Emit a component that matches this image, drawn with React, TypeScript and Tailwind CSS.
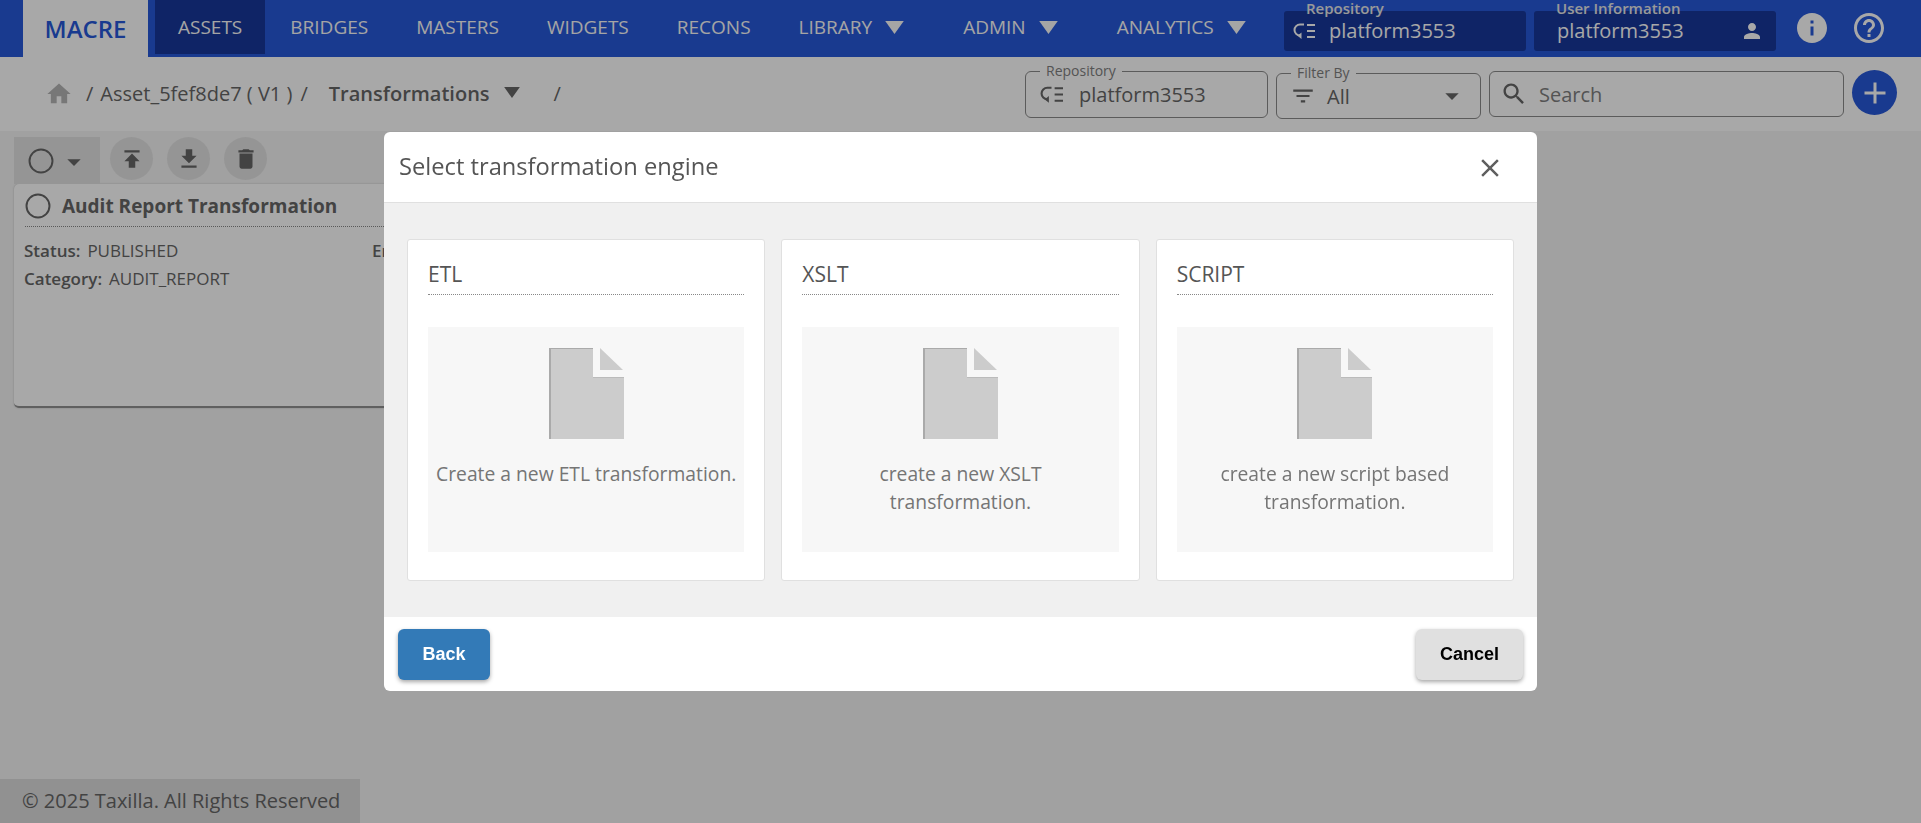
import React from 'react';

const ICONS = {
  home: 'M10 20v-6h4v6h5v-8h3L12 3 2 12h3v8z',
  person: 'M12 12c2.21 0 4-1.79 4-4s-1.79-4-4-4-4 1.79-4 4 1.79 4 4 4zm0 2c-2.67 0-8 1.34-8 4v2h16v-2c0-2.66-5.33-4-8-4z',
  info: 'M12 2C6.48 2 2 6.48 2 12s4.48 10 10 10 10-4.48 10-10S17.52 2 12 2zm1 15h-2v-6h2v6zm0-8h-2V7h2v2z',
  help: 'M11 18h2v-2h-2v2zm1-16C6.48 2 2 6.48 2 12s4.48 10 10 10 10-4.48 10-10S17.52 2 12 2zm0 18c-4.41 0-8-3.59-8-8s3.59-8 8-8 8 3.59 8 8-3.59 8-8 8zm0-14c-2.21 0-4 1.79-4 4h2c0-1.1.9-2 2-2s2 .9 2 2c0 2-3 1.75-3 5h2c0-2.25 3-2.5 3-5 0-2.21-1.79-4-4-4z',
  search: 'M15.5 14h-.79l-.28-.27C15.41 12.59 16 11.11 16 9.5 16 5.91 13.09 3 9.5 3S3 5.91 3 9.5 5.91 16 9.5 16c1.61 0 3.09-.59 4.23-1.57l.27.28v.79l5 4.99L20.49 19l-4.99-5zm-6 0C7.01 14 5 11.99 5 9.5S7.01 5 9.5 5 14 7.01 14 9.5 11.99 14 9.5 14z',
  filter: 'M10 18h4v-2h-4v2zM3 6v2h18V6H3zm3 7h12v-2H6v2z',
  publish: 'M5 4v2h14V4H5zm0 10h4v6h6v-6h4l-7-7-7 7z',
  download: 'M19 9h-4V3H9v6H5l7 7 7-7zM5 18v2h14v-2H5z',
  trash: 'M6 19c0 1.1.9 2 2 2h8c1.1 0 2-.9 2-2V7H6v12zM19 4h-3.5l-1-1h-5l-1 1H5v2h14V4z',
  add: 'M19 13h-6v6h-2v-6H5v-2h6V5h2v6h6v2z',
  close: 'M19 6.41 17.59 5 12 10.59 6.41 5 5 6.41 10.59 12 5 17.59 6.41 19 12 13.41 17.59 19 19 17.59 13.41 12z',
  drop: 'M7 10l5 5 5-5z',
};

const Icon = ({ name, className }: { name: keyof typeof ICONS; className: string }) => (
  <svg viewBox="0 0 24 24" className={className} fill="currentColor">
    <path d={ICONS[name]} />
  </svg>
);

// repository glyph: a C with an arrow at its foot, and three bars
const RepoIcon = ({ className }: { className: string }) => (
  <svg viewBox="0 0 22 16" className={className} fill="none" stroke="currentColor" strokeWidth="2">
    <path d="M11 1.5H7A5.5 5.5 0 0 0 7 12.5" />
    <path d="M8.5 9.5V16L4.5 12.8z" fill="currentColor" stroke="none" />
    <path d="M14 2h8M14 8h8M14 14h8" />
  </svg>
);

const Radio = ({ className }: { className: string }) => (
  <svg viewBox="0 0 24 24" className={className} fill="none" stroke="currentColor" strokeWidth="1.8">
    <circle cx="12" cy="12" r="10.6" />
  </svg>
);

const Triangle = ({ className }: { className: string }) => (
  <svg viewBox="0 0 20 14" className={className} fill="currentColor">
    <path d="M0 0h20L10 14z" />
  </svg>
);

const DocIcon = () => (
  <svg viewBox="0 0 75 91" className="w-[75px] h-[91px]">
    <path d="M0 0h44v30h31v61H0z" fill="#cccccc" />
    <path d="M0 0h44v1H2v90H0z" fill="#aaaaaa" />
    <path d="M51 0 74 22H51z" fill="#cccccc" />
    <path d="M44 29h31v1H44z" fill="#bbbbbb" />
  </svg>
);

const NAV = ['BRIDGES', 'MASTERS', 'WIDGETS', 'RECONS'];

const ENGINES = [
  { title: 'ETL', lines: ['Create a new ETL transformation.'] },
  { title: 'XSLT', lines: ['create a new XSLT', 'transformation.'] },
  { title: 'SCRIPT', lines: ['create a new script based', 'transformation.'] },
];

const HeaderField = ({ label, value, repo }: { label: string; value: string; repo?: boolean }) => (
  <div className="relative w-[242px] h-[40px] mt-[11px] bg-[#17379b] rounded-[3px] flex items-center text-[#ffffff] text-[20px]">
    <span className="absolute left-[22px] -top-[11px] text-[15px] leading-[16px] font-semibold text-[#e8e8e8]">{label}</span>
    {repo ? (
      <>
        <RepoIcon className="w-[22px] h-[16px] ml-[9px] mr-[14px] text-[#ffffff]" />
        <span>{value}</span>
      </>
    ) : (
      <>
        <span className="ml-[23px]">{value}</span>
        <Icon name="person" className="w-[24px] h-[24px] ml-auto mr-[12px] text-[#ffffff]" />
      </>
    )}
  </div>
);

const OutlinedField = ({
  label,
  className,
  children,
}: {
  label?: string;
  className: string;
  children: React.ReactNode;
}) => (
  <div className={`relative border border-[#8a8a8a] rounded-[6px] flex items-center text-[#666666] ${className}`}>
    {label && (
      <span className="absolute left-[14px] -top-[10px] px-[6px] bg-[#ffffff] text-[14px] leading-[18px] text-[#808080]">
        {label}
      </span>
    )}
    {children}
  </div>
);

export default function App() {
  return (
    <div className="h-screen flex flex-col bg-[#f4f4f4] overflow-hidden font-['Open_Sans',sans-serif]">
      {/* Top bar */}
      <header className="h-[57px] bg-[#2758d9] flex shrink-0 text-[19px] font-medium text-[#fafafa]">
        <div className="ml-[23px] w-[125px] h-full bg-[#ffffff] flex items-center justify-center text-[#2758d9] text-[24px] font-semibold">
          MACRE
        </div>
        <nav className="flex ml-[7px] gap-[2px]">
          <div className="h-[54px] px-[23px] bg-[#17379b] flex items-center">ASSETS</div>
          {NAV.map((item) => (
            <div key={item} className="h-[54px] px-[23px] flex items-center">
              {item}
            </div>
          ))}
          <div className="h-[54px] pl-[23px] flex items-center">
            LIBRARY
            <Triangle className="w-[19px] h-[13px] ml-[13px] text-[#fafafa]" />
          </div>
          <div className="h-[54px] pl-[57px] flex items-center">
            ADMIN
            <Triangle className="w-[19px] h-[13px] ml-[13px] text-[#fafafa]" />
          </div>
          <div className="h-[54px] pl-[57px] flex items-center">
            ANALYTICS
            <Triangle className="w-[19px] h-[13px] ml-[13px] text-[#fafafa]" />
          </div>
        </nav>
        <div className="flex gap-[8px] ml-auto font-normal">
          <HeaderField label="Repository" value="platform3553" repo />
          <HeaderField label="User Information" value="platform3553" />
        </div>
        <Icon name="info" className="w-[36px] h-[36px] ml-[18px] mt-[10px] text-[#ffffff]" />
        <Icon name="help" className="w-[36px] h-[36px] ml-[21px] mr-[34px] mt-[10px] text-[#ffffff]" />
      </header>

      {/* Breadcrumb row */}
      <div className="h-[74px] bg-[#ffffff] flex shrink-0 text-[20px] text-[#666666]">
        <div className="flex items-center">
          <Icon name="home" className="w-[28px] h-[28px] ml-[45px] text-[#b5b5b5]" />
          <span className="ml-[13px]">/</span>
          <span className="ml-[7px]">Asset_5fef8de7 ( V1 )</span>
          <span className="ml-[8px]">/</span>
          <span className="ml-[21px] font-semibold">Transformations</span>
          <Triangle className="w-[18px] h-[11px] ml-[13px] mb-[3px] text-[#666666]" />
          <span className="ml-[33px]">/</span>
        </div>
        <div className="ml-auto mr-[24px] flex items-start">
          <OutlinedField label="Repository" className="w-[243px] h-[47px] mt-[14px] text-[20px]">
            <RepoIcon className="w-[23px] h-[17px] ml-[14px] mr-[16px]" />
            <span>platform3553</span>
          </OutlinedField>
          <OutlinedField label="Filter By" className="w-[205px] h-[46px] mt-[16px] ml-[8px] text-[20px]">
            <Icon name="filter" className="w-[26px] h-[26px] ml-[13px]" />
            <span className="ml-[11px] mt-[2px]">All</span>
            <Icon name="drop" className="w-[32px] h-[32px] ml-auto mr-[12px]" />
          </OutlinedField>
          <OutlinedField className="w-[355px] h-[46px] mt-[14px] ml-[8px] text-[20px]">
            <Icon name="search" className="w-[28px] h-[28px] ml-[10px]" />
            <span className="ml-[11px] mt-[2px] text-[#808080]">Search</span>
          </OutlinedField>
          <div className="w-[45px] h-[45px] rounded-full bg-[#2758d9] ml-[8px] mt-[13px] flex items-center justify-center">
            <Icon name="add" className="w-[36px] h-[36px] text-[#ffffff]" />
          </div>
        </div>
      </div>

      {/* Asset list */}
      <main className="flex-1 pl-[14px] pt-[6px]">
        <div className="flex items-start h-[47px]">
          <div className="w-[86px] h-[47px] bg-[#e3e3e3] flex items-center">
            <Radio className="w-[26px] h-[26px] ml-[14px] text-[#666666]" />
            <Icon name="drop" className="w-[32px] h-[32px] ml-[4px] mt-[3px] text-[#666666]" />
          </div>
          {(['publish', 'download', 'trash'] as const).map((name, i) => (
            <div
              key={name}
              className={`w-[43px] h-[43px] rounded-full bg-[#e3e3e3] flex items-center justify-center ${i === 0 ? 'ml-[10px]' : 'ml-[14px]'}`}
            >
              <Icon name={name} className="w-[26px] h-[26px] text-[#666666]" />
            </div>
          ))}
        </div>
        <div className="w-[716px] h-[224px] bg-[#ffffff] rounded-[5px] border-b-2 border-[#909090] shadow-[0_0_2px_#bbbbbb] px-[10px] text-[#666666]">
          <div className="h-[43px] pt-[2px] flex items-center ml-[1px] border-b border-dotted border-[#888888]">
            <Radio className="w-[26px] h-[26px] mr-[11px] text-[#666666]" />
            <span className="text-[19px] font-bold">Audit Report Transformation</span>
          </div>
          <div className="flex mt-[13px] text-[17px] leading-[22px]">
            <div className="w-[348px]">
              <span className="font-semibold">Status:</span>
              <span className="ml-[7px]">PUBLISHED</span>
            </div>
            <span className="font-semibold">Engine:</span>
          </div>
          <div className="mt-[6px] text-[17px] leading-[22px]">
            <span className="font-semibold">Category:</span>
            <span className="ml-[7px]">AUDIT_REPORT</span>
          </div>
        </div>
      </main>

      <footer className="w-[360px] h-[44px] bg-[#dcdcdc] shrink-0 flex items-center pl-[22px] text-[20px] text-[#666666]">
        © 2025 Taxilla. All Rights Reserved
      </footer>

      {/* Modal */}
      <div className="fixed inset-0 bg-[#000000]/[.34] pl-[384px] pt-[132px]">
        <div className="w-[1153px] h-[559px] bg-[#ffffff] rounded-[6px] overflow-hidden flex flex-col">
          <div className="h-[71px] border-b border-[#e0e0e0] flex items-center shrink-0 pl-[15px] pr-[32px]">
            <h2 className="text-[23.7px] text-[#555555]">Select transformation engine</h2>
            <Icon name="close" className="w-[30px] h-[30px] ml-auto mt-[1px] text-[#606060]" />
          </div>
          <div className="h-[414px] bg-[#f0f0f0] pt-[36px] px-[23px]">
            <div className="grid grid-cols-3 gap-[16px]">
              {ENGINES.map((engine) => (
                <div
                  key={engine.title}
                  className="h-[342px] bg-[#ffffff] border border-[#e0e0e0] rounded-[3px] px-[20px]"
                >
                  <div className="h-[55px] flex items-end pb-[4px] border-b border-dotted border-[#888888] text-[21px] text-[#555555]">
                    {engine.title}
                  </div>
                  <div className="h-[225px] mt-[32px] bg-[#f7f7f7] flex flex-col items-center pt-[21px]">
                    <DocIcon />
                    <div className="mt-[21px] text-[19.3px] leading-[28px] font-medium text-[#757575] text-center">
                      {engine.lines.map((line) => (
                        <div key={line}>{line}</div>
                      ))}
                    </div>
                  </div>
                </div>
              ))}
            </div>
          </div>
          <div className="flex-1 flex justify-between items-start px-[14px] pt-[12px] font-['Liberation_Sans',sans-serif] text-[18px] font-bold">
            <button className="w-[92px] h-[51px] bg-[#337ab7] text-[#ffffff] rounded-[6px] shadow-[0_2px_4px_rgba(0,0,0,0.35)]">
              Back
            </button>
            <button className="w-[107px] h-[51px] bg-[#e0e0e0] text-[#000000] rounded-[6px] shadow-[0_2px_4px_rgba(0,0,0,0.35)]">
              Cancel
            </button>
          </div>
        </div>
      </div>
    </div>
  );
}
